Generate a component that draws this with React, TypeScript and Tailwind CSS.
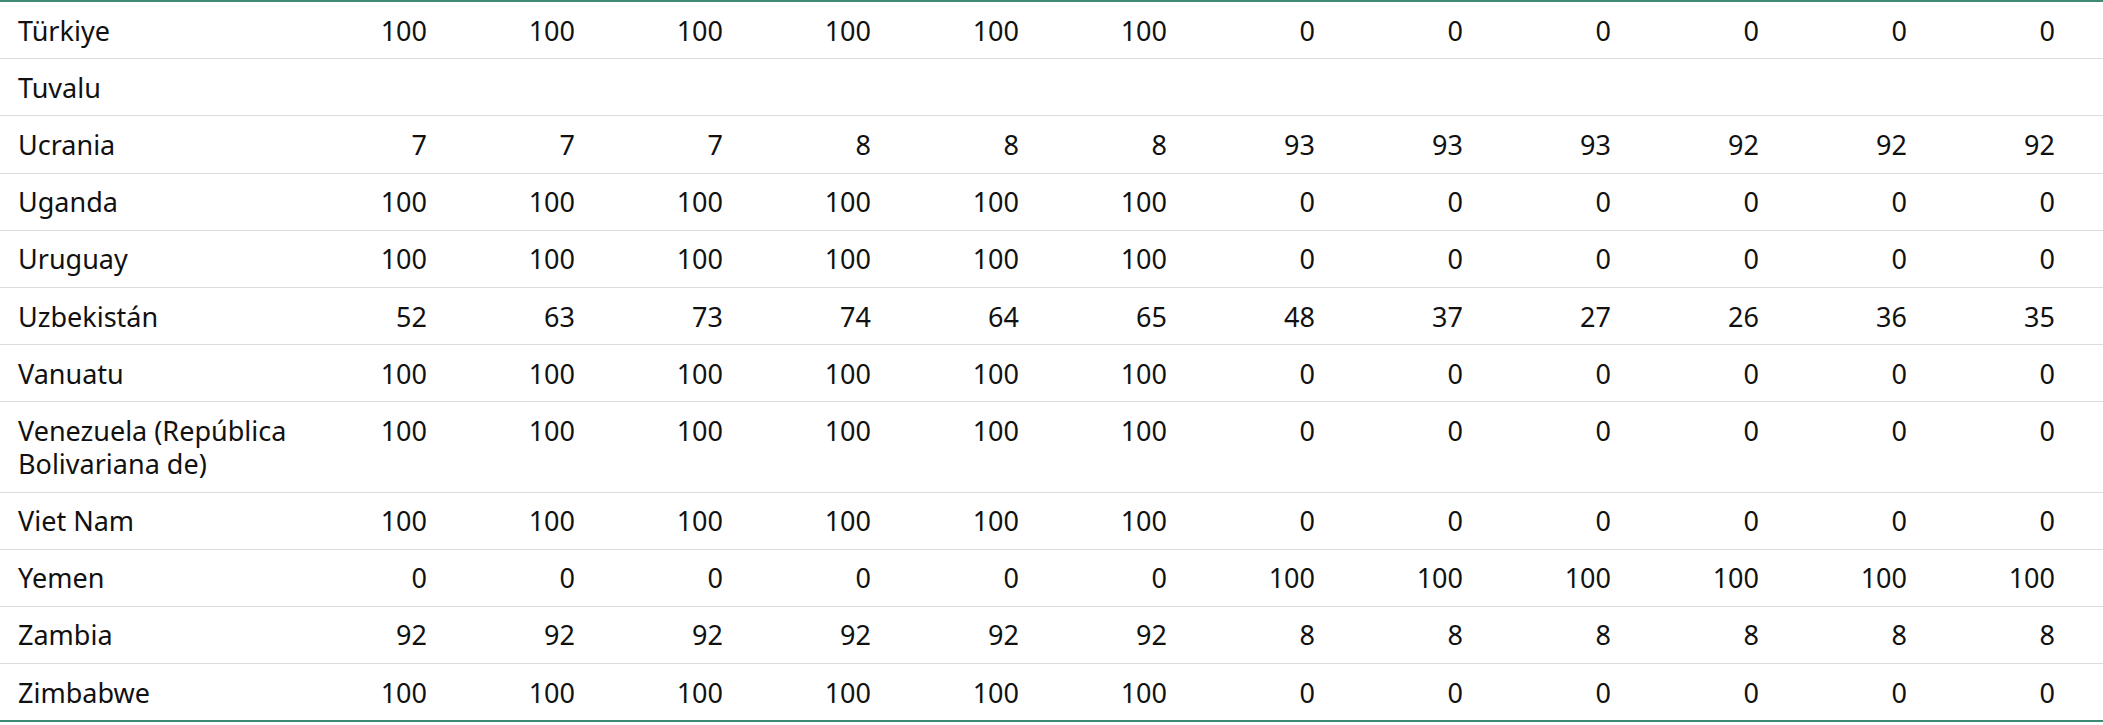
import React from "react";

const H = [100, 100, 100, 100, 100, 100, 0, 0, 0, 0, 0, 0];

const rows: { name: string; vals: number[] }[] = [
  { name: "Türkiye", vals: H },
  { name: "Tuvalu", vals: [] },
  { name: "Ucrania", vals: [7, 7, 7, 8, 8, 8, 93, 93, 93, 92, 92, 92] },
  { name: "Uganda", vals: H },
  { name: "Uruguay", vals: H },
  { name: "Uzbekistán", vals: [52, 63, 73, 74, 64, 65, 48, 37, 27, 26, 36, 35] },
  { name: "Vanuatu", vals: H },
  { name: "Venezuela (República Bolivariana de)", vals: H },
  { name: "Viet Nam", vals: H },
  { name: "Yemen", vals: [0, 0, 0, 0, 0, 0, 100, 100, 100, 100, 100, 100] },
  { name: "Zambia", vals: [92, 92, 92, 92, 92, 92, 8, 8, 8, 8, 8, 8] },
  { name: "Zimbabwe", vals: H },
];

export default function App() {
  return (
    <div className="w-[2103px] bg-white" style={{ fontFamily: '"Noto Sans", sans-serif' }}>
      <table className="w-[2103px] table-fixed border-collapse text-[27px] leading-[33px] text-[#111]">
        <colgroup>
          <col className="w-[327px]" />
          {Array.from({ length: 12 }).map((_, i) => (
            <col key={i} className="w-[148px]" />
          ))}
        </colgroup>
        <tbody className="border-t-2 border-b-2 border-[#3f8a74]">
          {rows.map((r, ri) => (
            <tr
              key={r.name}
              className={ri === rows.length - 1 ? "" : "border-b border-[#dcdcdc]"}
            >
              <td className="pl-[18px] pr-[18px] py-[11.6px] align-top text-left">{r.name}</td>
              {Array.from({ length: 12 }).map((_, i) => (
                <td key={i} className="pr-[48px] py-[11.6px] align-top text-right">
                  {r.vals.length ? r.vals[i] : ""}
                </td>
              ))}
            </tr>
          ))}
        </tbody>
      </table>
    </div>
  );
}
